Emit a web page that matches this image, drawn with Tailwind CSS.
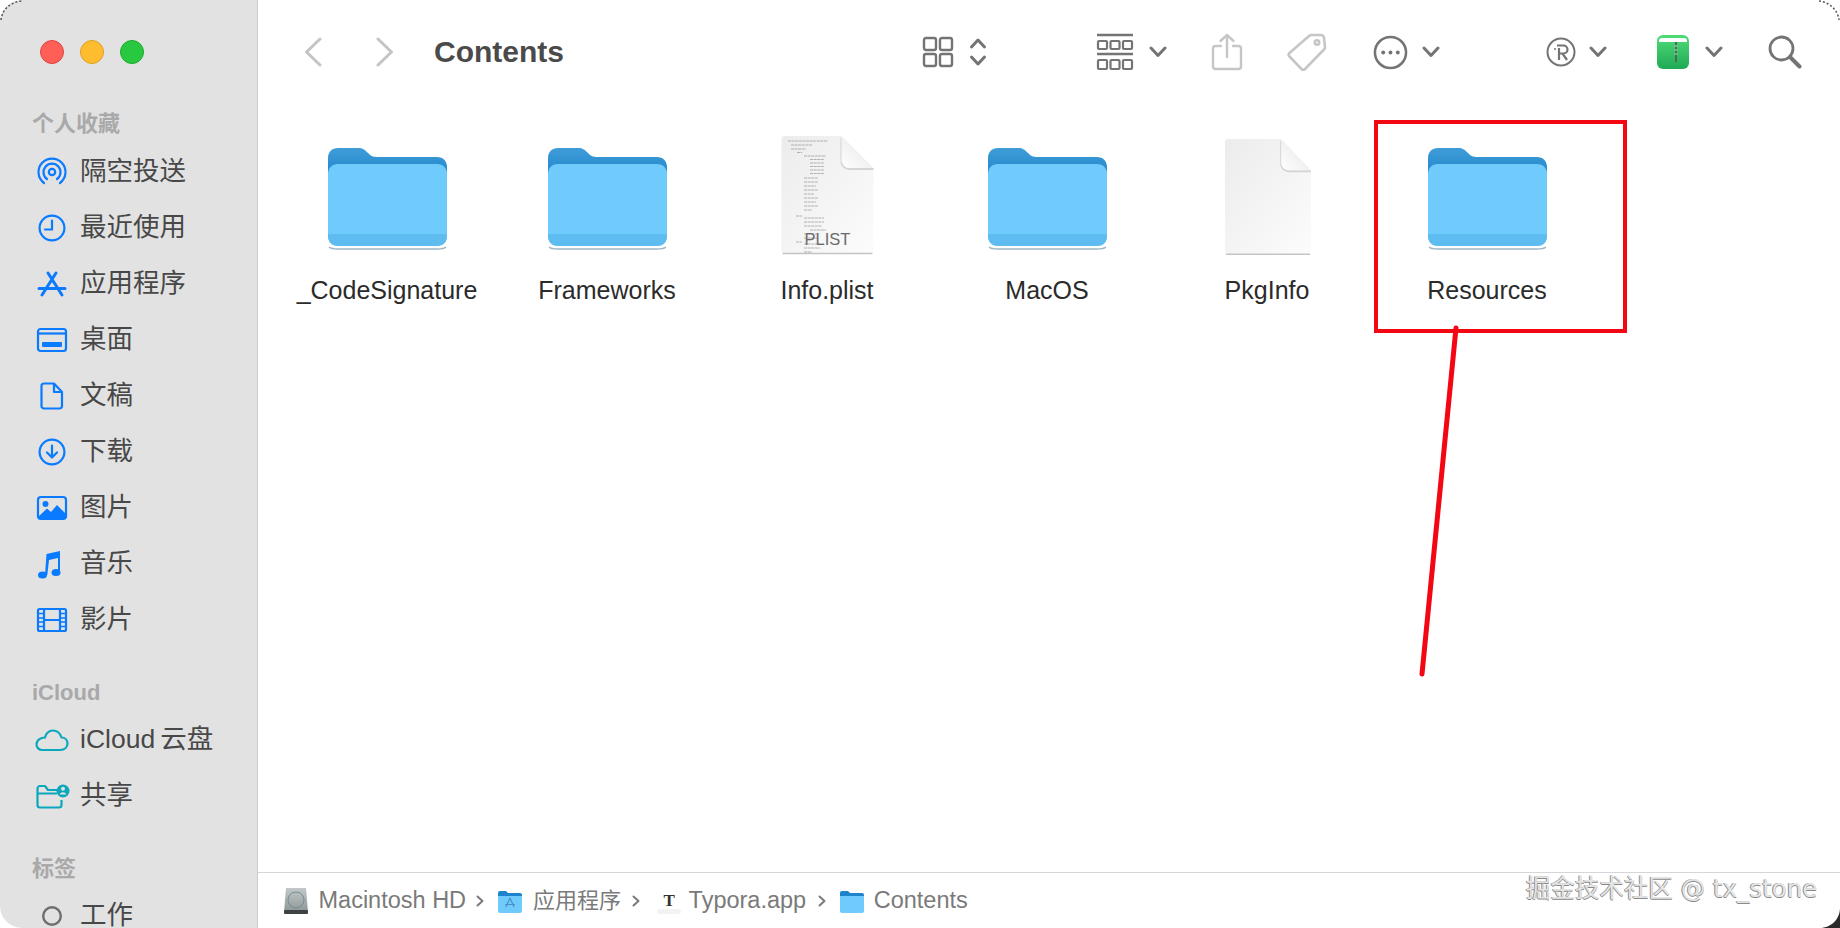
<!DOCTYPE html>
<html lang="en">
<head>
  <meta charset="UTF-8" />
  <title>Contents</title>
  <script src="https://cdn.jsdelivr.net/npm/@tailwindcss/browser@4"></script>
</head>
<body class="bg-white">
<div class="relative flex h-[928px] w-[1840px] overflow-hidden bg-white font-['Liberation_Sans','Noto_Sans_CJK_SC',sans-serif]">

  <!-- sidebar -->
  <aside class="flex h-full w-[258px] shrink-0 flex-col overflow-hidden rounded-tl-[22px] rounded-bl-[22px] border-r border-[#cccccc] bg-[#e2e2e2] pl-8">
    <div class="flex h-[104px] shrink-0 items-center gap-4 pl-[8px]">
      <span class="h-6 w-6 rounded-full border border-[#e0443e] bg-[#ff5f57]"></span>
      <span class="h-6 w-6 rounded-full border border-[#dea123] bg-[#febc2e]"></span>
      <span class="h-6 w-6 rounded-full border border-[#1aab29] bg-[#28c840]"></span>
    </div>

    <div class="mt-[2px] h-9 shrink-0 text-[22px] leading-9 font-bold text-[#a9a9a9]">个人收藏</div>
    <ul class="mt-[2px] shrink-0 text-[26.5px] text-[#484848]">
      <li class="flex h-14 items-center">
        <svg class="-ml-[2px] w-[50px] shrink-0" height="32" viewBox="0 0 50 32" fill="none" stroke="#0a7aff" stroke-width="2.2" stroke-linecap="round"><circle cx="22" cy="16" r="3.2"/><path d="M17 23A8.5 8.500 0 1 1 27 23M14 27A13.500 13.500 0 1 1 30 27"/></svg>
        <span>隔空投送</span>
      </li>
      <li class="flex h-14 items-center">
        <svg class="-ml-[2px] w-[50px] shrink-0" height="32" viewBox="0 0 50 32" fill="none" stroke="#0a7aff" stroke-width="2.2" stroke-linecap="round"><circle cx="22" cy="16" r="12.4"/><path d="M22 8.500V17.500H15"/></svg>
        <span>最近使用</span>
      </li>
      <li class="flex h-14 items-center">
        <svg class="-ml-[2px] w-[50px] shrink-0" height="32" viewBox="0 0 50 32" fill="none" stroke="#0a7aff" stroke-width="3" stroke-linecap="round"><path d="M18 5L32 27M26 5L12 27M9 20.500H35"/></svg>
        <span>应用程序</span>
      </li>
      <li class="flex h-14 items-center">
        <svg class="-ml-[2px] w-[50px] shrink-0" height="32" viewBox="0 0 50 32" fill="none" stroke="#0a7aff" stroke-width="2.2"><rect x="8" y="5" width="28" height="22" rx="2.500"/><path d="M8 9.500H36"/><rect x="12" y="18" width="20" height="5" rx="1" fill="#0a7aff" stroke="none"/></svg>
        <span>桌面</span>
      </li>
      <li class="flex h-14 items-center">
        <svg class="-ml-[2px] w-[50px] shrink-0" height="32" viewBox="0 0 50 32" fill="none" stroke="#0a7aff" stroke-width="2.2" stroke-linejoin="round"><path d="M14 3.500H24L32 12V26A2.500 2.500 0 0 1 29.500 28.500H14A2.500 2.500 0 0 1 11.500 26V6A2.500 2.500 0 0 1 14 3.500ZM24 3.500V12H32"/></svg>
        <span>文稿</span>
      </li>
      <li class="flex h-14 items-center">
        <svg class="-ml-[2px] w-[50px] shrink-0" height="32" viewBox="0 0 50 32" fill="none" stroke="#0a7aff" stroke-width="2.2" stroke-linecap="round" stroke-linejoin="round"><circle cx="22" cy="16" r="12.400"/><path d="M22 9.500V21M17 16.500L22 21.500L27 16.500"/></svg>
        <span>下载</span>
      </li>
      <li class="flex h-14 items-center">
        <svg class="-ml-[2px] w-[50px] shrink-0" height="32" viewBox="0 0 50 32"><rect x="8" y="5" width="28" height="22" rx="3" fill="none" stroke="#0a7aff" stroke-width="2.2"/><circle cx="15.500" cy="12" r="3" fill="#0a7aff"/><path d="M8 25L17 16.500L21 20L27 13L36 22V25A2 2 0 0 1 34 27H10A2 2 0 0 1 8 25Z" fill="#0a7aff"/></svg>
        <span>图片</span>
      </li>
      <li class="flex h-14 items-center">
        <svg class="-ml-[2px] w-[50px] shrink-0" height="32" viewBox="0 0 50 32" fill="#0a7aff"><ellipse cx="12.500" cy="27" rx="4.500" ry="3.500"/><ellipse cx="26" cy="24.500" rx="4.500" ry="3.500"/><path d="M15 27L16.500 6L30 3V24.500H28V10L19 12L17.300 27Z"/></svg>
        <span>音乐</span>
      </li>
      <li class="flex h-14 items-center">
        <svg class="-ml-[2px] w-[50px] shrink-0" height="32" viewBox="0 0 50 32" fill="none" stroke="#0a7aff" stroke-width="2.2"><rect x="8" y="5" width="28" height="22" rx="1.500"/><path d="M14 5V27M30 5V27M14 16H30"/><path d="M8.500 9.500H14M8.500 14H14M8.500 18H14M8.500 22.500H14M30 9.500H35.500M30 14H35.500M30 18H35.500M30 22.500H35.500" stroke-width="1.600"/></svg>
        <span>影片</span>
      </li>
    </ul>

    <div class="mt-[27px] h-9 shrink-0 text-[22px] leading-9 font-bold text-[#a9a9a9]">iCloud</div>
    <ul class="mt-[1px] shrink-0 text-[26.5px] text-[#484848]">
      <li class="flex h-14 items-center">
        <svg class="-ml-[2px] w-[50px] shrink-0" height="32" viewBox="0 0 50 32" fill="none" stroke="#0ba8bd" stroke-width="2.2" stroke-linejoin="round"><path d="M12 26H30C35 26 37.500 23 37.500 19.500C37.500 16 35 13.500 31.500 13.500C30 9 27 6.500 23 6.500C18.500 6.500 15.500 10 15 13.500C10.500 13.500 6.500 16 6.500 20.500C6.500 23.500 9 26 12 26Z"/></svg>
        <span>iCloud<span class="ml-[5px]">云盘</span></span>
      </li>
      <li class="flex h-14 items-center">
        <svg class="-ml-[2px] w-[50px] shrink-0" height="32" viewBox="0 0 50 32" fill="none" stroke="#0ba8bd" stroke-width="2.2" stroke-linejoin="round"><path d="M29 10H18L15 6H10A2.500 2.500 0 0 0 7.500 8.500V25A2.500 2.500 0 0 0 10 27.500H29A2.500 2.500 0 0 0 31.500 25V20M7.500 13.500H27"/><circle cx="33" cy="11" r="6.500" fill="#0ba8bd" stroke="none"/><circle cx="33" cy="8.800" r="2" fill="#e2e2e2" stroke="none"/><path d="M29.700 14.500A3.400 3 0 0 1 36.300 14.500Z" fill="#e2e2e2" stroke="none"/></svg>
        <span>共享</span>
      </li>
    </ul>

    <div class="mt-[27px] h-9 shrink-0 text-[22px] leading-9 font-bold text-[#a9a9a9]">标签</div>
    <ul class="mt-[1px] shrink-0 text-[26.5px] text-[#484848]">
      <li class="flex h-14 items-center">
        <svg class="-ml-[2px] w-[50px] shrink-0" height="32" viewBox="0 0 50 32" fill="none" stroke="#6e6e6e" stroke-width="2.4"><circle cx="22" cy="16" r="8.800"/></svg>
        <span>工作</span>
      </li>
    </ul>
  </aside>

  <!-- main -->
  <main class="flex min-w-0 flex-1 flex-col">
    <!-- toolbar -->
    <header class="flex h-[104px] shrink-0 items-center">
      <svg class="ml-[46px]" width="18" height="30" viewBox="0 0 18 30" fill="none" stroke="#c4c4c4" stroke-width="3" stroke-linecap="round" stroke-linejoin="round"><path d="M16 2L2.500 15L16 28"/></svg>
      <svg class="ml-[54px]" width="18" height="30" viewBox="0 0 18 30" fill="none" stroke="#c4c4c4" stroke-width="3" stroke-linecap="round" stroke-linejoin="round"><path d="M2 2L15.500 15L2 28"/></svg>
      <h1 class="mb-[2px] ml-[40px] text-[30px] font-bold text-[#4a4a4a]">Contents</h1>

      <svg class="ml-[358px]" width="32" height="32" viewBox="0 0 32 32" fill="none" stroke="#747474" stroke-width="2.4"><rect x="2" y="2" width="12" height="12" rx="2"/><rect x="18" y="2" width="12" height="12" rx="2"/><rect x="2" y="18" width="12" height="12" rx="2"/><rect x="18" y="18" width="12" height="12" rx="2"/></svg>
      <svg class="ml-[15px]" width="18" height="30" viewBox="0 0 18 30" fill="none" stroke="#747474" stroke-width="3" stroke-linecap="round" stroke-linejoin="round"><path d="M2.500 10L9 3L15.500 10M2.500 20L9 27L15.500 20"/></svg>

      <svg class="ml-[109px]" width="38" height="38" viewBox="0 0 38 38" fill="none" stroke="#747474"><path d="M1 2H37M1 21H37" stroke-width="2.6"/><g stroke-width="2.2"><rect x="2" y="8" width="9" height="8" rx="1"/><rect x="14.500" y="8" width="9" height="8" rx="1"/><rect x="27" y="8" width="9" height="8" rx="1"/><rect x="2" y="27" width="9" height="9" rx="1"/><rect x="14.500" y="27" width="9" height="9" rx="1"/><rect x="27" y="27" width="9" height="9" rx="1"/></g></svg>
      <svg class="ml-[15px]" width="18" height="12" viewBox="0 0 18 12" fill="none" stroke="#747474" stroke-width="3" stroke-linecap="round" stroke-linejoin="round"><path d="M2 2L9 9.500L16 2"/></svg>

      <svg class="ml-[44px]" width="32" height="38" viewBox="0 0 32 38" fill="none" stroke="#c6c6c6" stroke-width="2.4" stroke-linecap="round" stroke-linejoin="round"><path d="M10 13H4.500A2.500 2.500 0 0 0 2 15.500V33.500A2.500 2.500 0 0 0 4.500 36H27.500A2.500 2.500 0 0 0 30 33.500V15.500A2.500 2.500 0 0 0 27.500 13H22M16 24V2M9.500 8L16 2L22.500 8"/></svg>

      <svg class="ml-[44px]" width="40" height="38" viewBox="0 0 40 38" fill="none" stroke="#c6c6c6" stroke-width="2.6" stroke-linejoin="round"><path d="M25 2H34A3 3 0 0 1 37 5L38 14A3 3 0 0 1 37 16.500L18 36A2.500 2.500 0 0 1 14.500 36L2.500 23.500A2.500 2.500 0 0 1 2.500 20L22 3A4 4 0 0 1 25 2Z"/><circle cx="30" cy="9.500" r="2.200"/></svg>

      <svg class="ml-[46px]" width="35" height="35" viewBox="0 0 36 36" fill="none" stroke="#747474" stroke-width="2.6"><circle cx="18" cy="18" r="16"/><circle cx="10.500" cy="18" r="2" fill="#747474" stroke="none"/><circle cx="18" cy="18" r="2" fill="#747474" stroke="none"/><circle cx="25.500" cy="18" r="2" fill="#747474" stroke="none"/></svg>
      <svg class="ml-[14px]" width="18" height="12" viewBox="0 0 18 12" fill="none" stroke="#747474" stroke-width="3" stroke-linecap="round" stroke-linejoin="round"><path d="M2 2L9 9.500L16 2"/></svg>

      <svg class="ml-[106px]" width="30" height="30" viewBox="0 0 30 30" fill="none" stroke="#747474" stroke-width="2"><circle cx="15" cy="15" r="13.500"/><path d="M11 8.500H17.500A4 4 0 0 1 17.500 16.500H12.500M16.500 16.500L21 23M13 11V23" stroke-width="2.2"/><circle cx="9" cy="12" r="1" fill="#747474" stroke="none"/></svg>
      <svg class="ml-[13px]" width="18" height="12" viewBox="0 0 18 12" fill="none" stroke="#747474" stroke-width="3" stroke-linecap="round" stroke-linejoin="round"><path d="M2 2L9 9.500L16 2"/></svg>

      <svg class="ml-[49px]" width="34" height="34" viewBox="0 0 34 34">
        <defs><linearGradient id="zip" x1="0" y1="0" x2="0" y2="1"><stop offset="0" stop-color="#4fdc78"/><stop offset="1" stop-color="#1faa55"/></linearGradient></defs>
        <rect x="1" y="0" width="32" height="34" rx="6" fill="url(#zip)"/>
        <path d="M3 6A3 3 0 0 1 6 3H28A3 3 0 0 1 31 6V7H3Z" fill="#ffffff"/>
        <rect x="19" y="7" width="2" height="20" fill="#4d6a58"/>
        <path d="M18.500 11H21.500M18.500 15H21.500M18.500 19H21.500" stroke="#c9d8cd" stroke-width="1"/>
      </svg>
      <svg class="ml-[15px]" width="18" height="12" viewBox="0 0 18 12" fill="none" stroke="#747474" stroke-width="3" stroke-linecap="round" stroke-linejoin="round"><path d="M2 2L9 9.500L16 2"/></svg>

      <svg class="ml-[45px]" width="34" height="34" viewBox="0 0 34 34" fill="none" stroke="#747474" stroke-linecap="round"><circle cx="13.500" cy="13.500" r="11.500" stroke-width="2.8"/><path d="M22 22L31.500 31.500" stroke-width="4"/></svg>
    </header>

    <!-- icon grid -->
    <section class="grid flex-1 grid-cols-[repeat(6,220px)] content-start pt-[30px] pl-[19px]">
      <div class="flex flex-col items-center">
        <svg class="h-[130px] w-[119px]" viewBox="0 0 119 130"><use href="#folder"/></svg>
        <span class="mt-[10px] text-[25px] leading-8 text-[#2b2b2b]">_CodeSignature</span>
      </div>
      <div class="flex flex-col items-center">
        <svg class="h-[130px] w-[119px]" viewBox="0 0 119 130"><use href="#folder"/></svg>
        <span class="mt-[10px] text-[25px] leading-8 text-[#2b2b2b]">Frameworks</span>
      </div>
      <div class="flex flex-col items-center">
        <div class="relative h-[130px] w-[119px]">
          <svg class="h-[130px] w-[119px]" viewBox="0 0 119 130"><use href="#doc" transform="translate(1.500 2)"/>
            <g stroke="#8e8e8e" stroke-width=".8" stroke-dasharray="3 .6" opacity=".8"><path d="M20 7H60M23 11H44M23 15H38M29 18.500H34M36 22H58M42 25.500H56M42 29H56M42 32.500H56M42 36H56M42 39.500H56M36 44H50M36 48H50M36 52H48M36 56H50M36 60H46M36 64H50M36 68H48M36 72H50M36 76H44M28 82H34M36 84H56M36 88H56M36 92H54M42 96H58M36 100H50M36 104H50M28 108H34M36 110H56M36 114H52M36 118H44"/></g>
          </svg>
          <span class="absolute top-[93px] left-[37px] text-[16.5px] leading-6 text-[#6b6b6b]">PLIST</span>
        </div>
        <span class="mt-[10px] text-[25px] leading-8 text-[#2b2b2b]">Info.plist</span>
      </div>
      <div class="flex flex-col items-center">
        <svg class="h-[130px] w-[119px]" viewBox="0 0 119 130"><use href="#folder"/></svg>
        <span class="mt-[10px] text-[25px] leading-8 text-[#2b2b2b]">MacOS</span>
      </div>
      <div class="flex flex-col items-center">
        <svg class="h-[130px] w-[119px]" viewBox="0 0 119 130"><use href="#doc" transform="translate(5.800 5) scale(.935 .98)"/></svg>
        <span class="mt-[10px] text-[25px] leading-8 text-[#2b2b2b]">PkgInfo</span>
      </div>
      <div class="flex flex-col items-center">
        <svg class="h-[130px] w-[119px]" viewBox="0 0 119 130"><use href="#folder"/></svg>
        <span class="mt-[10px] text-[25px] leading-8 text-[#2b2b2b]">Resources</span>
      </div>
    </section>

    <!-- path bar -->
    <footer class="flex h-[56px] shrink-0 items-center border-t border-[#d6d6d6] pl-[25px] text-[23.5px] text-[#7a7a7a]">
      <svg width="26" height="28" viewBox="0 0 26 28"><defs><linearGradient id="hd" x1="0" y1="0" x2="0" y2="1"><stop offset="0" stop-color="#c2c8c8"/><stop offset="1" stop-color="#8f9696"/></linearGradient></defs><path d="M3 1H23L25 25H1Z" fill="url(#hd)"/><rect x="1" y="23" width="24" height="4" rx="1" fill="#3d4242"/><circle cx="13" cy="13" r="8" fill="none" stroke="#6d8e95" stroke-width="1"/></svg>
      <span class="ml-[9.500px]">Macintosh HD</span>
      <svg class="ml-[10px]" width="8" height="12" viewBox="0 0 8 12" fill="none" stroke="#7a7a7a" stroke-width="2" stroke-linecap="round" stroke-linejoin="round"><path d="M1.500 1.500L6.500 6L1.500 10.500"/></svg>
      <svg class="ml-[13px]" width="26" height="26" viewBox="0 0 26 26"><use href="#mini-folder"/><path d="M13 10L9 19M13 10L17 19M8 16.500H18" stroke="#4a90c8" stroke-width="1.200" fill="none"/></svg>
      <span class="ml-[10px] text-[22px]">应用程序</span>
      <svg class="ml-[11px]" width="8" height="12" viewBox="0 0 8 12" fill="none" stroke="#7a7a7a" stroke-width="2" stroke-linecap="round" stroke-linejoin="round"><path d="M1.500 1.500L6.500 6L1.500 10.500"/></svg>
      <span class="relative ml-[17px] flex h-[26px] w-[24px] items-center justify-center font-['Liberation_Serif',serif] text-[17px] font-bold text-[#333333]">T<span class="absolute right-0 bottom-0 left-0 h-[5px] rounded-full bg-[#f2f2f2]"></span></span>
      <span class="ml-[7.500px]">Typora.app</span>
      <svg class="ml-[12px]" width="8" height="12" viewBox="0 0 8 12" fill="none" stroke="#7a7a7a" stroke-width="2" stroke-linecap="round" stroke-linejoin="round"><path d="M1.500 1.500L6.500 6L1.500 10.500"/></svg>
      <svg class="ml-[12.500px]" width="26" height="26" viewBox="0 0 26 26"><use href="#mini-folder"/></svg>
      <span class="ml-[9px]">Contents</span>
    </footer>
  </main>

  <!-- annotation drawn over the window -->
  <svg class="pointer-events-none absolute inset-0" width="1840" height="928" viewBox="0 0 1840 928" fill="none" stroke="#f20713">
    <rect x="1376" y="122" width="249" height="209" stroke-width="4"/>
    <path d="M1456 328L1422 674" stroke-width="5" stroke-linecap="round"/>
  </svg>

  <span class="absolute top-[872px] left-[1526px] font-['DejaVu_Sans','Noto_Sans_CJK_SC',sans-serif] text-[24.5px] leading-[34px] whitespace-nowrap text-[#e4e4e4] [text-shadow:-1px_0_0_#8a8a8a,0_1px_0_#8a8a8a]">掘金技术社区 @ tx_stone</span>

  <!-- desktop showing at the window corners -->
  <svg class="absolute top-0 left-0" width="24" height="24" viewBox="0 0 24 24" fill="none" stroke="#555555" stroke-width="1.500" stroke-dasharray="2 2"><path d="M1 20C2 10 10 2 22 1"/></svg>
  <svg class="absolute top-0 right-0" width="24" height="24" viewBox="0 0 24 24" fill="none" stroke="#555555" stroke-width="1.500" stroke-dasharray="2 2"><path d="M3 1C13 2 22 10 23 20"/></svg>
  <svg class="absolute right-0 bottom-0" width="20" height="20" viewBox="0 0 20 20"><path d="M20 0V20H0C11 20 20 11 20 0Z" fill="#2a2a2a"/></svg>
</div>

<!-- shared icons -->
<svg class="absolute h-0 w-0" aria-hidden="true">
  <defs>
    <linearGradient id="tab" x1="0" y1="0" x2="0" y2="1"><stop offset="0" stop-color="#3f9dd8"/><stop offset="1" stop-color="#1a80c9"/></linearGradient>
    <linearGradient id="doc-fill" x1="0" y1="0" x2="1" y2="1"><stop offset="0" stop-color="#ececec"/><stop offset="1" stop-color="#fcfcfc"/></linearGradient>
    <linearGradient id="doc-fold" x1="0" y1="1" x2="1" y2="0"><stop offset="0" stop-color="#ffffff"/><stop offset="1" stop-color="#e2e2e2"/></linearGradient>
    <g id="folder" transform="translate(0 8)">
      <path d="M1 105C3 107 6 107 10 107H109C113 107 116 107 118 105" stroke="#9fb6c6" stroke-width="1.500" fill="none"/>
      <path d="M0 34V16C0 10 4 6 10 6H30C35 6 37 8 40 11C43 14 45 15 49 15H109C115 15 119 19 119 25V40H0Z" fill="url(#tab)"/>
      <path d="M0 32C0 26 4 22 10 22H109C115 22 119 26 119 32V94C119 100 115 104 109 104H10C4 104 0 100 0 94Z" fill="#6fcbfb"/>
      <path d="M0 92H119V94C119 100 115 104 109 104H10C4 104 0 100 0 94Z" fill="#5fbcf0"/>
    </g>
    <g id="doc">
      <path d="M15 0H72L104 34V114A3 3 0 0 1 101 117H15A3 3 0 0 1 12 114V3A3 3 0 0 1 15 0Z" fill="url(#doc-fill)"/>
      <path d="M13 117.500H103" stroke="#c4c4c4" stroke-width="1.500"/>
      <path d="M72 2V24A8 8 0 0 0 80 33H104" stroke="#d4d4d4" stroke-width="2" fill="none"/>
      <path d="M72 0L104 32H80A8 8 0 0 1 72 24Z" fill="url(#doc-fold)"/>
    </g>
    <g id="mini-folder">
      <path d="M1 5A2 2 0 0 1 3 3H9L11 5H23A2 2 0 0 1 25 7V10H1Z" fill="#1c83cc"/>
      <path d="M1 8H25V23A2 2 0 0 1 23 25H3A2 2 0 0 1 1 23Z" fill="#6fcbfb"/>
    </g>
  </defs>
</svg>
</body>
</html>
